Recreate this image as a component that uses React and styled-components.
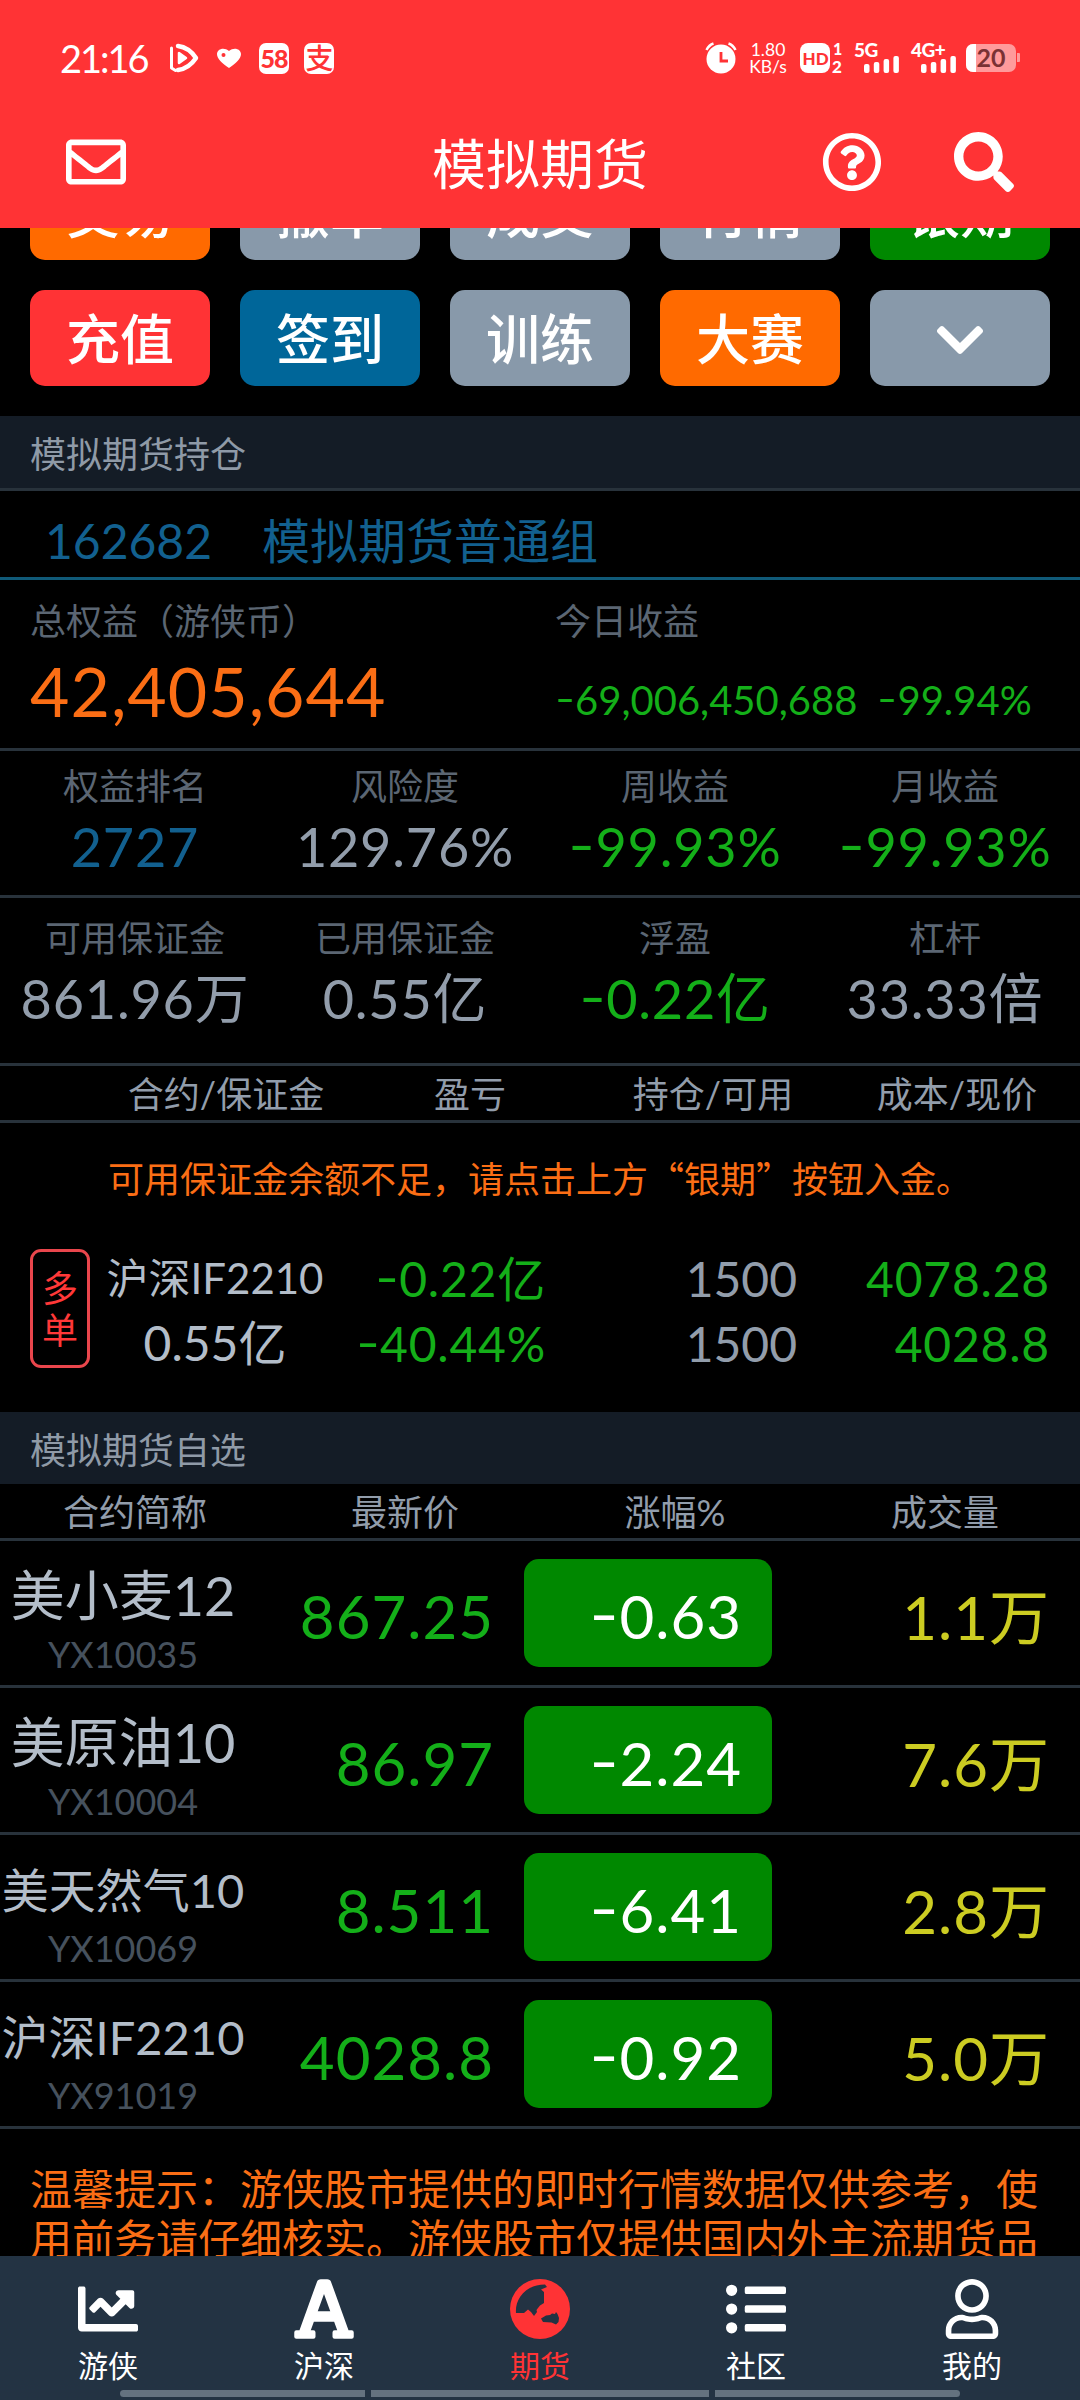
import styled, { createGlobalStyle } from 'styled-components';
import {
  FaRegEnvelope,
  FaRegQuestionCircle,
  FaSearch,
  FaChevronDown,
  FaChartLine,
  FaFont,
  FaListUl,
  FaRegUser,
} from 'react-icons/fa';

const colors = {
  red: '#ff3335',
  orange: '#ff6a00',
  amber: '#fb6e15',
  blue: '#006699',
  slate: '#8899aa',
  green: '#008800',
  up: '#14af19',
  yellow: '#cccc22',
  link: '#12608f',
  label: '#5b6673',
  muted: '#929dab',
  light: '#b3bdc9',
  line: '#28323b',
  panel: '#141c26',
};

const GlobalStyle = createGlobalStyle`
  * {
    box-sizing: border-box;
  }

  body {
    margin: 0;
    background: #000;
    font-family: Lato, 'Noto Sans CJK SC', sans-serif;
  }
`;

const Screen = styled.div`
  width: 1080px;
  height: 2400px;
  display: flex;
  flex-direction: column;
  overflow: hidden;
  background: #000;
`;

const Header = styled.header`
  height: 228px;
  flex: none;
  background: ${colors.red};
  color: #fff;
`;

const StatusBar = styled.div`
  height: 116px;
  padding: 0 60px;
  display: flex;
  justify-content: space-between;
  align-items: center;
`;

const StatusGroup = styled.div`
  display: flex;
  align-items: center;
  height: 36px;
`;

const Clock = styled.span`
  width: 109px;
  font-size: 38px;
  line-height: 36px;
  letter-spacing: -2px;
  white-space: nowrap;
`;

const StatusIcon = styled.svg`
  display: block;
  flex: none;
  overflow: visible;
  margin-left: ${props => props.$gap || 0}px;
`;

const AppTile = styled.span`
  width: 30px;
  height: 31px;
  margin-left: ${props => props.$gap}px;
  border-radius: 7px;
  background: #fff;
  color: ${colors.red};
  font-size: ${props => props.$size}px;
  font-weight: ${props => props.$weight || 700};
  line-height: 30px;
  text-align: center;
  letter-spacing: -1px;
`;

const NetSpeed = styled.span`
  width: 38px;
  margin-left: 12px;
  font-size: 17.5px;
  line-height: 17px;
  text-align: center;
  white-space: nowrap;
`;

const TitleBar = styled.div`
  height: 92px;
  padding: 0 66px;
  display: grid;
  grid-template-columns: 1fr auto 1fr;
  align-items: center;

  svg {
    display: block;
  }
`;

const Title = styled.h1`
  margin: 5px 0 0;
  font-size: 54px;
  font-weight: 400;
  line-height: 60px;
`;

const TitleActions = styled.div`
  display: flex;
  justify-content: flex-end;
  gap: 72px;
`;

const Content = styled.main`
  height: 2028px;
  flex: none;
  overflow: hidden;
`;

const Actions = styled.div`
  margin-top: -64px;
  padding: 0 30px 30px;
  display: grid;
  grid-template-columns: repeat(5, 180px);
  gap: 30px;
`;

const ActionButton = styled.button`
  height: 96px;
  padding: 3px 0 0;
  border: 0;
  border-radius: 15px;
  display: flex;
  align-items: center;
  justify-content: center;
  background: ${props => props.$bg};
  color: #fff;
  font-family: inherit;
  font-size: 54px;
  font-weight: 500;
  line-height: 90px;
`;

const SectionTitle = styled.h2`
  height: ${props => (props.$line ? 75 : 72)}px;
  margin: 0;
  padding: 2px 30px 0;
  border-bottom: ${props => (props.$line ? `3px solid ${colors.line}` : 'none')};
  background: ${colors.panel};
  color: #8f9aa7;
  font-size: 36px;
  font-weight: 400;
  line-height: 72px;
`;

const Group = styled.div`
  height: 89px;
  padding: 8px 0 0 45px;
  display: flex;
  gap: 50px;
  border-bottom: 3px solid #105a78;
  color: ${colors.link};
  font-size: 48px;
  line-height: 84px;
`;

const Summary = styled.div`
  height: 171px;
  padding: 16px 30px 0;
  display: grid;
  grid-template-columns: 525px 1fr;
  border-bottom: 3px solid ${colors.line};
`;

const Label = styled.div`
  height: 50px;
  color: ${colors.label};
  font-size: 36px;
  line-height: 50px;
`;

const Equity = styled.div`
  margin-top: 5px;
  color: ${colors.amber};
  font-size: 68px;
  line-height: 80px;
  letter-spacing: 1px;
`;

const Today = styled.div`
  margin-top: 14px;
  display: flex;
  gap: 20px;
  color: ${colors.up};
  font-size: 40px;
  line-height: 80px;
  white-space: nowrap;
`;

/* a longer, higher hyphen in front of falling figures */
const Minus = styled.span`
  display: inline-block;
  width: 0.5em;
  text-align: left;
  transform: translateY(-0.05em) scaleX(1.35);
  transform-origin: left center;
`;

const Stats = styled.div`
  height: ${props => props.$height}px;
  padding-top: ${props => props.$top}px;
  display: grid;
  grid-template-columns: repeat(4, 270px);
  border-bottom: 3px solid ${colors.line};
  text-align: center;
`;

const StatValue = styled.div`
  margin-top: ${props => props.$gap}px;
  color: ${props => props.$color || colors.muted};
  font-size: 54px;
  line-height: 60px;
  letter-spacing: 0.8px;
  white-space: nowrap;
`;

const TableHead = styled.div`
  height: 57px;
  padding-left: ${props => props.$indent || 0}px;
  display: grid;
  grid-template-columns: ${props => props.$columns};
  border-bottom: 3px solid ${colors.line};
  color: ${colors.muted};
  font-size: 36px;
  line-height: 57px;
  text-align: center;
  white-space: nowrap;
`;

const Warning = styled.p`
  height: 108px;
  margin: 0;
  color: ${colors.amber};
  font-family: 'Noto Sans CJK SC', sans-serif;
  font-size: 36px;
  line-height: 108px;
  text-align: center;
  white-space: nowrap;
`;

const Position = styled.div`
  height: 181px;
  padding: 18px 30px 0;
  display: grid;
  grid-template-columns: 60px 250px 206px 251px 253px;
`;

const SideTag = styled.div`
  height: 119px;
  padding: 15px 9px 0;
  border: 3px solid #e9464c;
  border-radius: 11px;
  color: #ff3838;
  font-size: 36px;
  line-height: 42px;
`;

const PositionCell = styled.div`
  margin-top: -3px;
  color: ${props => props.$color};
  font-size: 48px;
  line-height: 65px;
  letter-spacing: ${props => props.$spacing || 0}px;
  text-align: ${props => props.$align || 'right'};
  white-space: nowrap;
`;

const PositionName = styled.div`
  height: 64px;
  font-size: 42px;
`;

const Quote = styled.div`
  height: 147px;
  display: grid;
  grid-template-columns: 246px 248px 30px 248px 278px;
  align-items: center;
  border-bottom: 3px solid ${colors.line};
  font-size: 60px;
  letter-spacing: 1px;
  text-align: right;
  white-space: nowrap;
`;

const Contract = styled.div`
  padding-top: 16px;
  color: ${colors.light};
  font-size: ${props => (props.$long ? 47 : 54)}px;
  line-height: 66px;
  letter-spacing: 0;
  text-align: center;
`;

const Code = styled.div`
  color: #46515d;
  font-size: 36px;
  line-height: 50px;
`;

const Price = styled.div`
  padding-top: 6px;
  color: ${colors.up};
`;

const Change = styled.div`
  grid-column: 4;
  height: 108px;
  padding-right: 30px;
  border-radius: 15px;
  background: ${colors.green};
  color: #fff;
  line-height: 114px;
`;

const Volume = styled.div`
  padding-top: 1px;
  color: ${colors.yellow};
`;

const Notice = styled.p`
  margin: 0;
  padding: 33px 30px 0;
  color: ${colors.amber};
  font-family: 'Noto Sans CJK SC', sans-serif;
  font-size: 42px;
  line-height: 50px;
  white-space: nowrap;
`;

const TabBar = styled.nav`
  position: relative;
  height: 144px;
  flex: none;
  display: grid;
  grid-template-columns: repeat(5, 216px);
  background: #233343;
`;

const Tab = styled.a`
  padding-top: 23px;
  display: flex;
  flex-direction: column;
  align-items: center;
  color: ${props => (props.$active ? colors.red : '#fff')};
  font-size: 30px;
  line-height: 40px;
`;

const TabIcon = styled.span`
  width: 60px;
  height: 60px;
  margin-bottom: 6px;
  display: flex;
  align-items: center;
  justify-content: center;

  svg {
    flex: none;
  }
`;

const GestureHint = styled.div`
  position: absolute;
  left: 120px;
  bottom: 3px;
  width: 840px;
  height: 7px;
  display: grid;
  grid-template-columns: 245px 338px 245px;
  gap: 6px;
  border-radius: 4px;
  overflow: hidden;

  span {
    background: #64727f;
  }
`;

const GlobeIcon = ({ size }) => (
  <svg width={size} height={size} viewBox="0 0 60 60">
    <circle cx="30" cy="30" r="30" fill="currentColor" />
    <g fill="#233343">
      <path d="M6 34C5 22 13 6 35 5.500L37 8L31 10.500L34 13V24L30 26.500L28 29L26.500 31L27 33L24 37L21 33L18 30.500L14 34Z" />
      <path d="M31 39.500L36 36.500L40 36L42 34.500L45 35L46 33L47.500 35L49 39L48.500 43L46 45.500L41.500 43.500L33 43Z" />
    </g>
  </svg>
);

const actions = [
  { text: '交易', bg: colors.orange },
  { text: '撤单', bg: colors.slate },
  { text: '成交', bg: colors.slate },
  { text: '行情', bg: colors.slate },
  { text: '银期', bg: colors.green },
  { text: '充值', bg: colors.red },
  { text: '签到', bg: colors.blue },
  { text: '训练', bg: colors.slate },
  { text: '大赛', bg: colors.orange },
];

const returns = [
  { label: '权益排名', value: '2727', color: colors.link },
  { label: '风险度', value: '129.76%' },
  { label: '周收益', value: '-99.93%', color: colors.up },
  { label: '月收益', value: '-99.93%', color: colors.up },
];

const margins = [
  { label: '可用保证金', value: '861.96万' },
  { label: '已用保证金', value: '0.55亿' },
  { label: '浮盈', value: '-0.22亿', color: colors.up },
  { label: '杠杆', value: '33.33倍' },
];

const quotes = [
  { name: '美小麦12', code: 'YX10035', price: '867.25', change: '-0.63', volume: '1.1万' },
  { name: '美原油10', code: 'YX10004', price: '86.97', change: '-2.24', volume: '7.6万' },
  { name: '美天然气10', code: 'YX10069', price: '8.511', change: '-6.41', volume: '2.8万', long: true },
  { name: '沪深IF2210', code: 'YX91019', price: '4028.8', change: '-0.92', volume: '5.0万', long: true },
];

const tabs = [
  { text: '游侠', icon: FaChartLine },
  { text: '沪深', icon: FaFont, size: 68 },
  { text: '期货', icon: GlobeIcon, active: true },
  { text: '社区', icon: FaListUl },
  { text: '我的', icon: FaRegUser },
];

const Figure = ({ value }) =>
  value.startsWith('-') ? <><Minus>-</Minus>{value.slice(1)}</> : value;

const Signal = ({ label, gap, width }) => (
  <StatusIcon $gap={gap} width={width} height="32" viewBox={`0 0 ${width} 32`} fill="#fff">
    <text x="0" y="15" fontSize="19" fontWeight="900" letterSpacing="-0.5">{label}</text>
    {[9, 11, 14, 17].map((h, i) => (
      <rect key={h} x={width - 35 + i * 9.8} y={31 - h} width="5.5" height={h} rx="2" />
    ))}
  </StatusIcon>
);

const Status = () => (
  <StatusBar>
    <StatusGroup>
      <Clock>21:16</Clock>
      <StatusIcon width="30" height="30" viewBox="0 0 30 30" fill="none" stroke="#fff" strokeLinejoin="round">
        <path d="M9 3C17 4 23 9 27 15C23 21 17 26 9 27" strokeWidth="4.5" strokeLinecap="round" />
        <path d="M2.5 5v20l4 2.500" strokeWidth="3" strokeLinecap="round" />
        <path d="M10 10v10l7-5z" fill="#fff" strokeWidth="2.500" />
      </StatusIcon>
      <StatusIcon $gap={18} width="24" height="20" viewBox="0 0 24 20">
        <path d="M12 20C5 15 0 11 0 6C0 1 7-1.5 12 3C17-1.5 24 1 24 6C24 11 19 15 12 20Z" fill="#fff" />
        <circle cx="6.5" cy="7" r="2" fill={colors.red} />
      </StatusIcon>
      <AppTile $gap={18} $size={25} $weight={900}>58</AppTile>
      <AppTile $gap={15} $size={28} $weight={500}>支</AppTile>
    </StatusGroup>
    <StatusGroup>
      <StatusIcon width="32" height="32" viewBox="0 0 32 32" fill="none" stroke="#fff">
        <circle cx="16" cy="17" r="14.5" fill="#fff" stroke="none" />
        <path d="M1.5 8Q4 3 8.500 1.500M30.500 8Q28 3 23.500 1.500" strokeWidth="2.500" />
        <path d="M16 10v9h7" stroke={colors.red} strokeWidth="2.800" />
      </StatusIcon>
      <NetSpeed>1.80<br />KB/s</NetSpeed>
      <StatusIcon $gap={13} width="44" height="32" viewBox="0 0 44 32" fill="#fff">
        <rect x="0" y="1" width="30" height="30" rx="8" />
        <text x="2.500" y="22.500" fontSize="17" fontWeight="900" fill={colors.red}>HD</text>
        <text x="33" y="13" fontSize="16" fontWeight="900">1</text>
        <text x="32" y="31" fontSize="17" fontWeight="900">2</text>
      </StatusIcon>
      <Signal label="5G" gap={10} width={45} />
      <Signal label="4G+" gap={12} width={45} />
      <StatusIcon $gap={10} width="54" height="30" viewBox="0 0 54 30">
        <rect x="0" y="1" width="50" height="28" rx="7" fill="#ff9a9b" />
        <path d="M51 10h2q1 0 1 1v7q0 1-1 1h-2z" fill="#ff9a9b" />
        <path d="M7 1h3v28h-3a7 7 0 0 1-7-7v-14a7 7 0 0 1 7-7z" fill="#fff" />
        <text x="10.500" y="24" fontSize="25" fontWeight="700" fill="#7a3134">20</text>
      </StatusIcon>
    </StatusGroup>
  </StatusBar>
);

const StatRow = ({ items, height, top, gap }) => (
  <Stats $height={height} $top={top}>
    {items.map(item => (
      <div key={item.label}>
        <Label>{item.label}</Label>
        <StatValue $gap={gap} $color={item.color}>
          <Figure value={item.value} />
        </StatValue>
      </div>
    ))}
  </Stats>
);

const App = () => {
  return (
    <Screen>
      <GlobalStyle />
      <Header>
        <Status />
        <TitleBar>
          <FaRegEnvelope size={60} />
          <Title>模拟期货</Title>
          <TitleActions>
            <FaRegQuestionCircle size={60} />
            <FaSearch size={60} />
          </TitleActions>
        </TitleBar>
      </Header>

      <Content>
        <Actions>
          {actions.map(action => (
            <ActionButton key={action.text} $bg={action.bg}>{action.text}</ActionButton>
          ))}
          <ActionButton $bg={colors.slate}>
            <FaChevronDown size={54} />
          </ActionButton>
        </Actions>

        <SectionTitle $line>模拟期货持仓</SectionTitle>
        <Group>
          <span>162682</span>
          <span>模拟期货普通组</span>
        </Group>

        <Summary>
          <div>
            <Label>总权益（游侠币）</Label>
            <Equity>42,405,644</Equity>
          </div>
          <div>
            <Label>今日收益</Label>
            <Today>
              <span><Figure value="-69,006,450,688" /></span>
              <span><Figure value="-99.94%" /></span>
            </Today>
          </div>
        </Summary>

        <StatRow items={returns} height={147} top={10} gap={6} />
        <StatRow items={margins} height={168} top={15} gap={6} />

        <TableHead $indent={104} $columns="244px 244px 242px 246px">
          <span>合约/保证金</span>
          <span>盈亏</span>
          <span>持仓/可用</span>
          <span>成本/现价</span>
        </TableHead>
        <Warning>可用保证金余额不足，请点击上方“银期”按钮入金。</Warning>
        <Position>
          <SideTag>多<br />单</SideTag>
          <PositionCell $align="center" $color={colors.light}>
            <PositionName>沪深IF2210</PositionName>
            0.55亿
          </PositionCell>
          <PositionCell $color={colors.up} $spacing={0.8}>
            <Figure value="-0.22亿" /><br /><Figure value="-40.44%" />
          </PositionCell>
          <PositionCell $color={colors.muted}>1500<br />1500</PositionCell>
          <PositionCell $color={colors.up} $spacing={0.8}>4078.28<br />4028.8</PositionCell>
        </Position>

        <SectionTitle>模拟期货自选</SectionTitle>
        <TableHead $columns="repeat(4, 270px)">
          <span>合约简称</span>
          <span>最新价</span>
          <span>涨幅%</span>
          <span>成交量</span>
        </TableHead>
        {quotes.map(quote => (
          <Quote key={quote.code}>
            <Contract $long={quote.long}>
              {quote.name}
              <Code>{quote.code}</Code>
            </Contract>
            <Price>{quote.price}</Price>
            <Change><Figure value={quote.change} /></Change>
            <Volume>{quote.volume}</Volume>
          </Quote>
        ))}

        <Notice>
          温馨提示：游侠股市提供的即时行情数据仅供参考，使<br />
          用前务请仔细核实。游侠股市仅提供国内外主流期货品
        </Notice>
      </Content>

      <TabBar>
        {tabs.map(tab => (
          <Tab key={tab.text} $active={tab.active}>
            <TabIcon>
              <tab.icon size={tab.size || 60} />
            </TabIcon>
            {tab.text}
          </Tab>
        ))}
        <GestureHint>
          <span />
          <span />
          <span />
        </GestureHint>
      </TabBar>
    </Screen>
  );
};

export default App;
